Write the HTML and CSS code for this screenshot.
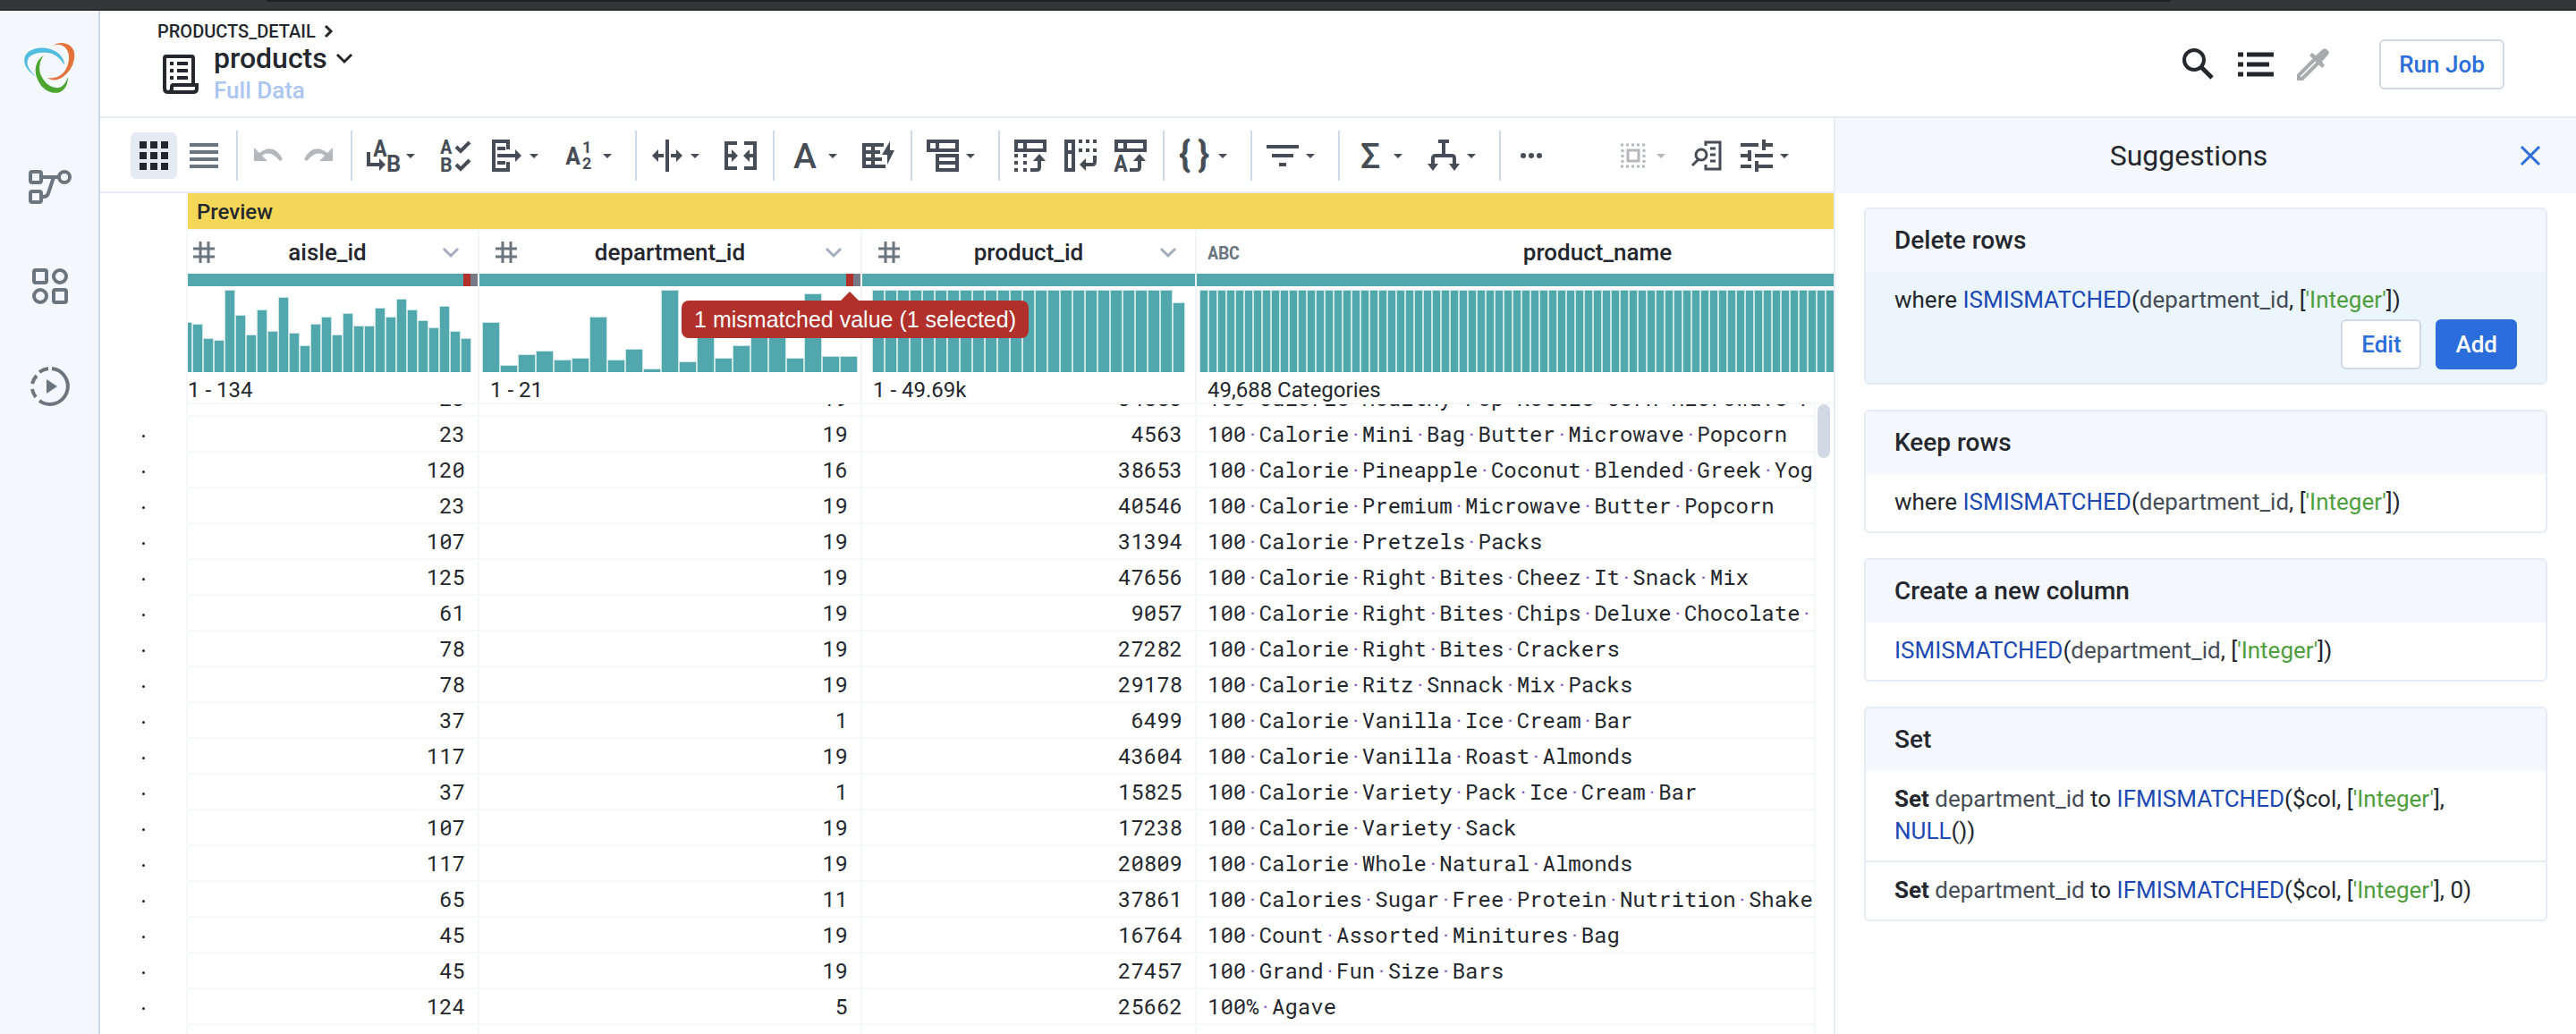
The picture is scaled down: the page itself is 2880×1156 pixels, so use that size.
FILE: index.html
```html
<!DOCTYPE html>
<html lang="en">
<head>
<meta charset="utf-8">
<title>products</title>
<link rel="stylesheet" href="styles.css">
</head>
<body>
<div class="chrome"><div class="chrome-field"></div></div>
<div class="app">
  <nav class="sidebar" aria-label="Main">
    <a class="logo" href="#" aria-label="Home">
      <svg width="56" height="56" viewBox="0 0 56 56">
        <path fill="#50bce0" d="M13 37C3 32-3 21 2 13C8 4 26 3 36 10C42 14 45 19 45 25C40 16 34 12 26 11C15 10 6 13 4 19C2 25 7 32 13 37Z"/>
        <path fill="#e57339" d="M32 3C41-3 53 0 56 10C58 24 48 38 37 41C33 42 29 41 26 39C34 40 40 38 45 32C50 25 52 15 48 8C45 2 38 1 32 3Z"/>
        <path fill="#4ca52f" d="M22 14C12 20 10 32 16 43C21 53 32 58 40 55C46 52 49 46 49 38C46 47 41 51 35 50C27 49 21 42 18 34C16 26 18 19 22 14Z"/>
      </svg>
    </a>
    <a class="nav-link" href="#" aria-label="Flows">
      <svg width="48" height="48" viewBox="0 0 48 48" fill="none" stroke="#6b7580" stroke-width="4">
        <rect x="2" y="8" width="12" height="12" rx="2"/><rect x="2" y="30" width="12" height="12" rx="2"/>
        <circle cx="40" cy="14" r="6"/><path d="M16 14H33M16 36Q21 36 22 32L28 14"/>
      </svg>
    </a>
    <a class="nav-link" href="#" aria-label="Library">
      <svg width="48" height="48" viewBox="0 0 48 48" fill="none" stroke="#6b7580" stroke-width="4">
        <rect x="6" y="6" width="14" height="14" rx="2"/><rect x="28" y="28" width="14" height="14" rx="2"/>
        <circle cx="35" cy="13" r="7"/><circle cx="13" cy="35" r="7"/>
      </svg>
    </a>
    <a class="nav-link" href="#" aria-label="Jobs">
      <svg width="48" height="48" viewBox="0 0 48 48" fill="none" stroke="#6b7580" stroke-width="4">
        <path d="M26 4A20 20 0 1 1 12 40"/><path d="M22 4A20 20 0 0 0 12 8M9 12A20 20 0 0 0 4 21M4 27A20 20 0 0 0 8 36"/>
        <path fill="#6b7580" stroke="none" d="M20 16V32L32 24Z"/>
      </svg>
    </a>
  </nav>
  <header class="page-header">
    <div class="titles">
      <a class="crumb" href="#">PRODUCTS_DETAIL
        <svg width="10" height="14" viewBox="0 0 10 14" fill="none" stroke="#24272d" stroke-width="3"><path d="M2 1L8 7L2 13"/></svg>
      </a>
      <div class="title-row">
        <svg width="44" height="48" viewBox="0 0 44 48" fill="none" stroke="#24272d" stroke-width="4">
          <path d="M4 40V6Q4 4 6 4H34Q36 4 36 6V36"/><path d="M4 40Q4 44 8 44H36Q40 44 40 40V36H14Q12 36 12 38V40Q12 44 8 44"/>
          <path stroke-dasharray="4 4 12 20" d="M10 12H32M10 20H32M10 28H32"/>
        </svg>
        <div class="title-text">
          <button class="title-button" type="button">products
            <svg width="20" height="14" viewBox="0 0 20 14" fill="none" stroke="#24272d" stroke-width="3"><path d="M2 3L10 11L18 3"/></svg>
          </button>
          <a class="sample" href="#">Full Data</a>
        </div>
      </div>
    </div>
    <div class="header-actions">
      <button class="icon-button" type="button" aria-label="Search"><svg width="40" height="40" viewBox="0 0 40 40" fill="none" stroke="#24272d" stroke-width="4"><circle cx="15" cy="15" r="11"/><path stroke-width="5" d="M23 23L35 35"/></svg></button>
      <button class="icon-button" type="button" aria-label="Recipe"><svg width="40" height="40" viewBox="0 0 40 40" fill="none" stroke="#24272d" stroke-width="5"><path d="M0 9H6M0 20H6M0 31H6M10 9H40M10 20H35M10 31H40"/></svg></button>
      <button class="icon-button" type="button" aria-label="Pick"><svg width="40" height="40" viewBox="0 0 40 40"><path fill="none" stroke="#a9abad" stroke-width="4" d="M23 13L4 32V36H8L27 17"/><path fill="#a9abad" d="M16 10L19 7L23 10L31 3Q34 1 36 4Q39 6 37 9L30 17L33 21L30 24Z"/></svg></button>
      <button class="button run" type="button">Run Job</button>
    </div>
  </header>
  <main class="workspace">
    <div class="toolbar" role="toolbar">
      <div class="group views">
        <button class="view active" type="button" aria-label="Grid view"><svg width="32" height="32" viewBox="0 0 32 32" fill="none" stroke="#24272d" stroke-width="8"><path stroke-dasharray="8 4" d="M0 4H32M0 16H32M0 28H32"/></svg></button>
        <button class="view" type="button" aria-label="List view"><svg width="32" height="32" viewBox="0 0 32 32" fill="none" stroke="#6b7580" stroke-width="4"><path d="M0 4H32M0 12H32M0 20H32M0 28H32"/></svg></button>
      </div>
      <div class="group">
        <button class="tool off" type="button" aria-label="Undo"><svg class="ic" viewBox="0 0 36 36"><path class="f" d="M2 9V24H17L11 18Q20 11 31 24L34 22Q24 3 8 15Z"/></svg></button>
        <button class="tool off" type="button" aria-label="Redo"><svg class="ic" viewBox="0 0 36 36"><path class="f" d="M34 9V24H19L25 18Q16 11 5 24L2 22Q12 3 28 15Z"/></svg></button>
      </div>
      <div class="group">
        <button class="tool menu" type="button" aria-label="Rename"><svg class="ic" viewBox="0 0 36 36"><text x="7" y="19" class="g">A</text><text x="22" y="36" class="g">B</text><path d="M2 14V28H15"/><path class="f" d="M14 21L21 28L14 35Z"/></svg></button>
        <button class="tool" type="button" aria-label="Edit columns"><svg class="ic" viewBox="0 0 36 36"><text x="0" y="16" class="g m">A</text><text x="0" y="36" class="g m">B</text><path d="M18 8L23 13L33 3M18 28L23 33L33 23"/></svg></button>
        <button class="tool menu" type="button" aria-label="Move"><svg class="ic" viewBox="0 0 36 36"><path d="M20 11V2H4V34H20V25M8 10H17M8 26H17M8 18H30"/><path class="f" d="M28 11L35 18L28 25Z"/></svg></button>
        <button class="tool menu" type="button" aria-label="Sort"><svg class="ic" viewBox="0 0 36 36"><text x="2" y="28" class="g l">A</text><text x="21" y="15" class="g s">1</text><text x="21" y="33" class="g s">2</text></svg></button>
      </div>
      <div class="group">
        <button class="tool menu" type="button" aria-label="Split"><svg class="ic" viewBox="0 0 36 36"><path d="M18 0V36M7 18H14M22 18H29"/><path class="f" d="M1 18L8 11V25ZM35 18L28 11V25Z"/></svg></button>
        <button class="tool" type="button" aria-label="Merge"><svg class="ic" viewBox="0 0 36 36"><path d="M14 4H2V32H14M22 4H34V32H22M2 18H9M34 18H27"/><path class="f" d="M8 11L15 18L8 25ZM28 11L21 18L28 25Z"/></svg></button>
      </div>
      <div class="group">
        <button class="tool menu" type="button" aria-label="Format"><svg class="ic" viewBox="0 0 36 36"><text x="5" y="32" class="g xl">A</text></svg></button>
        <button class="tool" type="button" aria-label="Standardize"><svg class="ic" viewBox="0 0 36 36"><path d="M2 4V32M12 4V32M0 6H24M0 14H20M0 22H22M0 30H26"/><path class="f" d="M31 2L22 17H28V28L36 12H31Z"/></svg></button>
      </div>
      <div class="group">
        <button class="tool menu" type="button" aria-label="Pivot"><svg class="ic" viewBox="0 0 36 36"><path d="M2 2H34V12H2ZM12 2V12M12 18H34V34H12ZM12 26H34"/></svg></button>
      </div>
      <div class="group">
        <button class="tool" type="button" aria-label="Unpivot"><svg class="ic" viewBox="0 0 36 36"><path d="M2 2H34V12H2ZM12 2V12M18 34H25Q28 34 28 31V22"/><path stroke-dasharray="4 4" d="M2 16V36M12 16V36"/><path class="f" d="M21 24L28 16L35 24Z"/></svg></button>
        <button class="tool" type="button" aria-label="Rows to header"><svg class="ic" viewBox="0 0 36 36"><path d="M2 2H10V34H2ZM2 14H10M34 18V25Q34 28 31 28H22"/><path stroke-dasharray="4 4" d="M16 2H36M16 12H36"/><path class="f" d="M17 28L24 21V35Z"/></svg></button>
        <button class="tool" type="button" aria-label="Header from row"><svg class="ic" viewBox="0 0 36 36"><path d="M2 2H34V12H2ZM12 2V12M17 34H25Q28 34 28 31V22"/><text x="-1" y="36" class="g">A</text><path class="f" d="M21 24L28 16L35 24Z"/></svg></button>
      </div>
      <div class="group">
        <button class="tool menu" type="button" aria-label="Nest"><svg class="ic" viewBox="0 0 36 36"><text x="0" y="30" class="g br">{</text><text x="21" y="30" class="g br">}</text></svg></button>
      </div>
      <div class="group">
        <button class="tool menu" type="button" aria-label="Filter"><svg class="ic" viewBox="0 0 36 36"><path d="M0 8H36M6 18H30M14 28H22"/></svg></button>
      </div>
      <div class="group">
        <button class="tool menu" type="button" aria-label="Aggregate"><svg class="ic" viewBox="0 0 36 36"><text x="7" y="32" class="g xl">Σ</text></svg></button>
        <button class="tool menu" type="button" aria-label="Conditions"><svg class="ic" viewBox="0 0 36 36"><path d="M12 2H24M18 2V18M6 28V21Q6 18 9 18H27Q30 18 30 21V28"/><path class="f" d="M0 27H12L6 35ZM24 27H36L30 35Z"/></svg></button>
      </div>
      <div class="group">
        <button class="tool" type="button" aria-label="More"><svg class="ic" viewBox="0 0 36 36"><path class="f" d="M6 18a3 3 0 1 0 6 0a3 3 0 1 0-6 0M15 18a3 3 0 1 0 6 0a3 3 0 1 0-6 0M24 18a3 3 0 1 0 6 0a3 3 0 1 0-6 0"/></svg></button>
      </div>
      <div class="group end">
        <button class="tool menu off" type="button" aria-label="Selection"><svg class="ic thin" viewBox="0 0 36 36"><path stroke-dasharray="3 3" d="M4 6H32M4 30H32M6 11V27M30 11V27"/><path d="M12 12H24V24H12Z"/></svg></button>
        <button class="tool" type="button" aria-label="Inspect"><svg class="ic thin" viewBox="0 0 36 36"><path d="M17 7V3H33V33H17V28M22 10H28M22 17H28M22 24H28M9 22L2 29"/><circle cx="12" cy="17" r="6"/></svg></button>
        <button class="tool menu" type="button" aria-label="Options"><svg class="ic" viewBox="0 0 36 36"><path d="M0 6H20M24 6H36M26 0V12M0 18H10M10 12V24M16 18H36M0 30H12M18 30H36M18 24V36"/></svg></button>
      </div>
    </div>
    <div class="grid">
      <div class="preview">Preview</div>
      <div class="columns">
        <table class="head">
          <colgroup><col class="c1"><col class="c2"><col class="c3"><col class="c4"></colgroup>
          <thead>
            <tr>
              <th scope="col">
                <div class="col-title"><svg class="type" viewBox="0 0 36 24"><path d="M14 0V24M23 0V24M6 8H30M6 17H30"/></svg><span>aisle_id</span><svg class="type chev" viewBox="0 0 36 24"><path d="M10 8L18 16L26 8"/></svg></div>
                <div class="quality"><i class="ok"></i><i class="bad"></i><i class="none"></i></div>
                <div class="hist first" data-bars="56 54 38 36 92 64 42 70 46 84 44 30 54 62 42 66 52 52 72 62 82 70 58 50 74 46 38" data-pitch="12"></div>
                <div class="range">1 - 134</div>
              </th>
              <th scope="col">
                <div class="col-title"><svg class="type" viewBox="0 0 36 24"><path d="M14 0V24M23 0V24M6 8H30M6 17H30"/></svg><span>department_id</span><svg class="type chev" viewBox="0 0 36 24"><path d="M10 8L18 16L26 8"/></svg></div>
                <div class="quality"><i class="ok"></i><i class="bad"></i><i class="none"></i></div>
                <div class="tooltip" role="tooltip">1 mismatched value (1 selected)</div>
                <div class="hist" data-bars="56 8 20 24 14 16 62 14 26 4 92 12 50 16 30 44 60 16 88 18 18" data-pitch="20"></div>
                <div class="range">1 - 21</div>
              </th>
              <th scope="col">
                <div class="col-title"><svg class="type" viewBox="0 0 36 24"><path d="M14 0V24M23 0V24M6 8H30M6 17H30"/></svg><span>product_id</span><svg class="type chev" viewBox="0 0 36 24"><path d="M10 8L18 16L26 8"/></svg></div>
                <div class="quality"><i class="ok"></i></div>
                <div class="hist inset" data-bars="92*24 78" data-pitch="14"></div>
                <div class="range">1 - 49.69k</div>
              </th>
              <th scope="col">
                <div class="col-title"><b class="abc">ABC</b><span>product_name</span><svg class="type chev" viewBox="0 0 36 24"><path d="M10 8L18 16L26 8"/></svg></div>
                <div class="quality"><i class="ok"></i></div>
                <div class="hist" data-bars="92*88" data-pitch="10"></div>
                <div class="range">49,688 Categories</div>
              </th>
            </tr>
          </thead>
        </table>
      </div>
      <div class="rows">
        <table class="body">
          <colgroup><col class="gutter"><col class="b1"><col class="c2"><col class="c3"><col></colgroup>
          <tbody id="rows"></tbody>
        </table>
        <div class="track"><div class="thumb"></div></div>
      </div>
    </div>
  </main>
  <aside class="panel">
    <div class="panel-head"><h2>Suggestions</h2><button class="close" type="button" aria-label="Close"><svg width="22" height="22" viewBox="0 0 22 22" fill="none" stroke="#2a6ddb" stroke-width="3"><path d="M1 1L21 21M21 1L1 21"/></svg></button></div>
    <div class="cards">
      <section class="card selected">
        <h3>Delete rows</h3>
        <div class="item">
          <p>where <span class="fn">ISMISMATCHED</span>(<span class="col">department_id</span>, [<span class="str">'Integer'</span>])</p>
          <div class="buttons"><button class="button" type="button">Edit</button><button class="button primary" type="button">Add</button></div>
        </div>
      </section>
      <section class="card">
        <h3>Keep rows</h3>
        <div class="item"><p>where <span class="fn">ISMISMATCHED</span>(<span class="col">department_id</span>, [<span class="str">'Integer'</span>])</p></div>
      </section>
      <section class="card">
        <h3>Create a new column</h3>
        <div class="item"><p><span class="fn">ISMISMATCHED</span>(<span class="col">department_id</span>, [<span class="str">'Integer'</span>])</p></div>
      </section>
      <section class="card">
        <h3>Set</h3>
        <div class="item"><p><b>Set</b> <span class="col">department_id</span> to <span class="fn">IFMISMATCHED</span>($col, [<span class="str">'Integer'</span>], <span class="fn">NULL</span>())</p></div>
        <div class="item"><p><b>Set</b> <span class="col">department_id</span> to <span class="fn">IFMISMATCHED</span>($col, [<span class="str">'Integer'</span>], 0)</p></div>
      </section>
    </div>
  </aside>
</div>
<script src="app.js"></script>
</body>
</html>
```
FILE: styles.css
```css
* { box-sizing: border-box; }
html, body { height: 100%; }
body {
  margin: 0;
  display: flex;
  flex-direction: column;
  overflow: hidden;
  background: #fff;
  color: #24272d;
  font: 26px/36px Roboto, "Liberation Sans", sans-serif;
}
button { font: inherit; color: inherit; border: 0; padding: 0; background: none; cursor: pointer; white-space: nowrap; }
a { color: inherit; text-decoration: none; }
svg { display: block; flex: none; overflow: visible; }
h2, h3, p { margin: 0; }

.chrome { flex: none; height: 12px; background: #35363a; border-bottom: 2px solid #28292c; }
.chrome-field { height: 2px; margin: 0 453px 0 298px; background: #202124; border-radius: 0 0 6px 6px; }

.app {
  flex: 1;
  min-height: 0;
  display: grid;
  grid-template-columns: 112px minmax(0, 1fr) 830px;
  grid-template-rows: 120px minmax(0, 1fr);
}

.sidebar {
  grid-row: 1 / 3;
  display: flex;
  flex-direction: column;
  align-items: center;
  padding-top: 36px;
  background: #f4f8fd;
  border-right: 2px solid #cdd8e4;
}
.logo { margin-bottom: 80px; }
.nav-link { padding: 0 0 64px 2px; }

.page-header {
  grid-column: 2 / 4;
  display: flex;
  justify-content: space-between;
  padding: 8px 80px 0 64px;
  border-bottom: 2px solid #e5ecf4;
}
.crumb { display: flex; align-items: center; gap: 9px; font-size: 20px; font-weight: 500; line-height: 30px; }
.title-row { display: flex; align-items: center; gap: 15px; margin-top: -3px; padding-left: 4px; }
.title-text { display: flex; flex-direction: column; }
.title-button { display: flex; align-items: center; gap: 9px; font-size: 32px; font-weight: 500; line-height: 36px; }
.sample { color: #abc6f2; font-weight: 500; line-height: 36px; }
.header-actions { display: flex; align-items: center; gap: 24px; height: 104px; }
.icon-button { width: 40px; }
.button {
  height: 56px;
  padding: 0 20px;
  border: 2px solid #d0d9e4;
  border-radius: 6px;
  background: #fff;
  color: #2a6ddb;
  font-weight: 500;
  line-height: 36px;
}
.button.primary { background: #2a6ddb; border-color: #2a6ddb; color: #fff; }
.button.run { width: 140px; margin-left: 30px; }

.workspace { display: flex; flex-direction: column; min-width: 0; min-height: 0; }
.toolbar {
  flex: none;
  display: flex;
  align-items: center;
  height: 84px;
  padding: 2px 26px 0 34px;
  border-bottom: 2px solid #e5eaf5;
  color: #464d56;
}
.group { display: flex; align-items: center; gap: 20px; height: 56px; padding: 0 18px 0 16px; border-right: 2px solid #ccd9e6; }
.group.views { gap: 4px; padding: 0 10px 0 0; }
.group:nth-last-child(2) { border: 0; }
.group.end { margin-left: auto; border: 0; padding-right: 16px; }
.view { display: flex; align-items: center; justify-content: center; width: 52px; height: 52px; border-radius: 6px; }
.view.active { background: #e5ebf4; }
.tool { display: flex; align-items: center; gap: 8px; }
.tool.menu { padding-right: 8px; }
.tool.menu::after { content: ""; border: 5px solid transparent; border-top-color: currentColor; border-bottom: 0; }
.tool.off { color: #b4b8bc; }
.ic { width: 36px; height: 36px; fill: none; stroke: currentColor; stroke-width: 4; }
.ic.thin { stroke-width: 3; }
.ic .f { fill: currentColor; stroke: none; }
.g { fill: currentColor; stroke: none; font: 700 26px "Roboto Mono", "Liberation Mono", monospace; }
.g.m { font-size: 22px; }
.g.s { font: 700 18px Roboto, sans-serif; }
.g.l { font-size: 28px; }
.g.xl { font: 500 39px Roboto, sans-serif; }
.g.br { font: 700 40px Roboto, sans-serif; }

.grid { flex: 1; min-height: 0; display: flex; flex-direction: column; }
.preview {
  margin-left: 96px;
  height: 42px;
  padding-left: 10px;
  background: #f6d858;
  border-bottom: 2px solid #f5f6f8;
  font-size: 24px;
  font-weight: 500;
  line-height: 42px;
  border-left: 2px solid #f5f6f8;
}
.columns { margin-left: 96px; overflow: hidden; border-left: 2px solid #f5f6f8; border-bottom: 2px solid #f5f6f8; flex: none; }
table { border-collapse: separate; border-spacing: 0; table-layout: fixed; }
.head { width: 2038px; margin-left: -12px; }
.c1 { width: 338px; }
.b1 { width: 326px; }
.c2 { width: 428px; }
.c3 { width: 374px; }
.c4 { width: 898px; }
.gutter { width: 98px; }
th { position: relative; padding: 0; text-align: left; font-weight: 400; border-right: 2px solid #f3f5f8; }
.col-title { display: flex; align-items: center; justify-content: space-between; height: 48px; padding: 0 12px; font-weight: 500; }
.type { width: 36px; height: 24px; fill: none; stroke: #6b7580; stroke-width: 3; }
.chev { stroke: #a3aebc; }
.abc { width: 36px; color: #6b7580; font: 700 20px/24px "Roboto Mono", "Liberation Mono", monospace; }
.quality { display: flex; height: 14px; }
.quality i { width: 8px; }
.quality .ok { flex: 1; background: #51a7ab; }
.quality .bad { background: #b1302b; }
.quality .none { background: #757a86; }
.hist { display: flex; align-items: flex-end; height: 96px; padding-left: 3px; }
.hist.first { padding-left: 5px; }
.hist.inset { padding-left: 11px; }
.bar { flex: none; background: #51a7ab; border: 1px solid #c9e5e6; border-bottom: 0; }
.range { height: 34px; padding: 2px 12px 0; font-size: 24px; line-height: 36px; }
.tooltip {
  position: absolute;
  z-index: 1;
  right: -188px;
  top: 78px;
  height: 42px;
  padding: 0 14px;
  border-radius: 8px;
  background: #b1302b;
  color: #fff;
  font: 25px/42px "Liberation Sans", sans-serif;
  white-space: nowrap;
}
.tooltip::before { content: ""; position: absolute; right: 190px; bottom: 100%; border: 10px solid transparent; border-bottom-color: #b1302b; border-top: 0; }

.rows { flex: 1; min-height: 0; display: flex; align-items: flex-start; overflow: hidden; }
.body { width: calc(100% - 20px); margin-top: -26px; }
td {
  height: 40px;
  padding: 0 14px;
  border-right: 2px solid #f5f7f9;
  border-bottom: 2px solid #f5f7f9;
  font: 24px/38px "Roboto Mono", "Liberation Mono", monospace;
  white-space: pre;
  overflow: hidden;
  text-align: right;
}
td:first-child { border-bottom-color: transparent; text-align: center; }
td:first-child::before { content: ""; display: inline-block; width: 3px; height: 3px; border-radius: 2px; background: #24272d; vertical-align: middle; }
td:last-child { padding: 0 0 0 12px; text-align: left; }
.sp { color: #9254d0; }
.track { width: 20px; padding-left: 2px; }
.thumb { width: 14px; height: 60px; border-radius: 7px; background: #d0d9e4; }

.panel { border-left: 2px solid #e5ecf4; min-height: 0; }
.panel-head { display: flex; align-items: center; height: 84px; padding: 0 40px 0 0; background: #f4f8fd; }
.panel-head h2 { flex: 1; font-size: 32px; font-weight: 400; line-height: 40px; text-align: center; padding-left: 24px; }
.cards { display: flex; flex-direction: column; gap: 28px; padding: 16px 32px; }
.card { border: 2px solid #e4ebf4; border-radius: 6px; overflow: hidden; }
.card h3 { height: 70px; padding: 0 32px; background: #f4f8fd; font-size: 28px; font-weight: 500; line-height: 70px; }
.item { padding: 13px 32px 15px; }
.item + .item { border-top: 2px solid #e4ebf4; }
.item b { font-weight: 700; }
.selected .item { background: #ebf5fe; }
.buttons { display: flex; justify-content: flex-end; gap: 16px; padding-top: 4px; }
.buttons .button { min-width: 90px; }
.fn { color: #1c49b4; }
.col { color: #464d56; }
.str { color: #4f9e3e; }
```
FILE: app.js
```js
const rows = [
  ['23', '19', '34883', '100 Calorie Healthy Pop Kettle Corn Microwave Popcorn'],
  ['23', '19', '4563', '100 Calorie Mini Bag Butter Microwave Popcorn'],
  ['120', '16', '38653', '100 Calorie Pineapple Coconut Blended Greek Yogurt'],
  ['23', '19', '40546', '100 Calorie Premium Microwave Butter Popcorn'],
  ['107', '19', '31394', '100 Calorie Pretzels Packs'],
  ['125', '19', '47656', '100 Calorie Right Bites Cheez It Snack Mix'],
  ['61', '19', '9057', '100 Calorie Right Bites Chips Deluxe Chocolate Chip'],
  ['78', '19', '27282', '100 Calorie Right Bites Crackers'],
  ['78', '19', '29178', '100 Calorie Ritz Snnack Mix Packs'],
  ['37', '1', '6499', '100 Calorie Vanilla Ice Cream Bar'],
  ['117', '19', '43604', '100 Calorie Vanilla Roast Almonds'],
  ['37', '1', '15825', '100 Calorie Variety Pack Ice Cream Bar'],
  ['107', '19', '17238', '100 Calorie Variety Sack'],
  ['117', '19', '20809', '100 Calorie Whole Natural Almonds'],
  ['65', '11', '37861', '100 Calories Sugar Free Protein Nutrition Shake'],
  ['45', '19', '16764', '100 Count Assorted Minitures Bag'],
  ['45', '19', '27457', '100 Grand Fun Size Bars'],
  ['124', '5', '25662', '100% Agave'],
  ['', '', '', '']
];

document.getElementById('rows').innerHTML = rows.map(([a, d, p, name]) =>
  `<tr><td></td><td>${a}</td><td>${d}</td><td>${p}</td><td>${name.split(' ').join('<span class="sp">·</span>')}</td></tr>`
).join('');

for (const hist of document.querySelectorAll('.hist')) {
  const heights = hist.dataset.bars.split(' ').flatMap(part => {
    const [height, count = 1] = part.split('*').map(Number);
    return Array(count).fill(height);
  });
  hist.innerHTML = heights.map(h =>
    `<div class="bar" style="width:${hist.dataset.pitch}px;height:${h}px"></div>`).join('');
}
```
